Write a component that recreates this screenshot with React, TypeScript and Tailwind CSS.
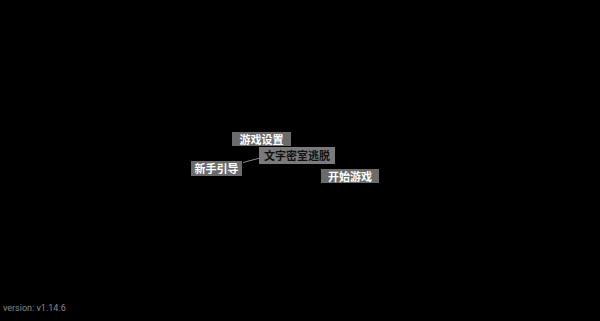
import React from "react";

const node =
  "absolute flex items-center justify-center font-['Noto_Sans_CJK_SC','Noto_Sans',sans-serif] font-bold text-[11px]";

export default function App() {
  return (
    <div className="relative w-[600px] h-[321px] bg-black overflow-hidden">
      <svg className="absolute left-0 top-0" width="600" height="321">
        <line x1="243" y1="162.5" x2="260" y2="158" stroke="#8a8a8a" strokeWidth="1" />
      </svg>
      <div className={node + " left-[232px] top-[132px] w-[59px] h-[14px] bg-[#6b6b6b] text-white"}>游戏设置</div>
      <div className={node + " left-[259px] top-[147px] w-[76px] h-[17px] bg-[#7a7a7a] text-[#111]"}>文字密室逃脱</div>
      <div className={node + " left-[191px] top-[161px] w-[51px] h-[15px] bg-[#6b6b6b] text-white"}>新手引导</div>
      <div className={node + " left-[321px] top-[169px] w-[58px] h-[14px] bg-[#6b6b6b] text-white"}>开始游戏</div>
      <div className="absolute left-[3px] top-[302px] font-['Roboto',sans-serif] text-[9px] leading-[12px] text-[#8a8a8a]">
        version: v1.14.6
      </div>
    </div>
  );
}
